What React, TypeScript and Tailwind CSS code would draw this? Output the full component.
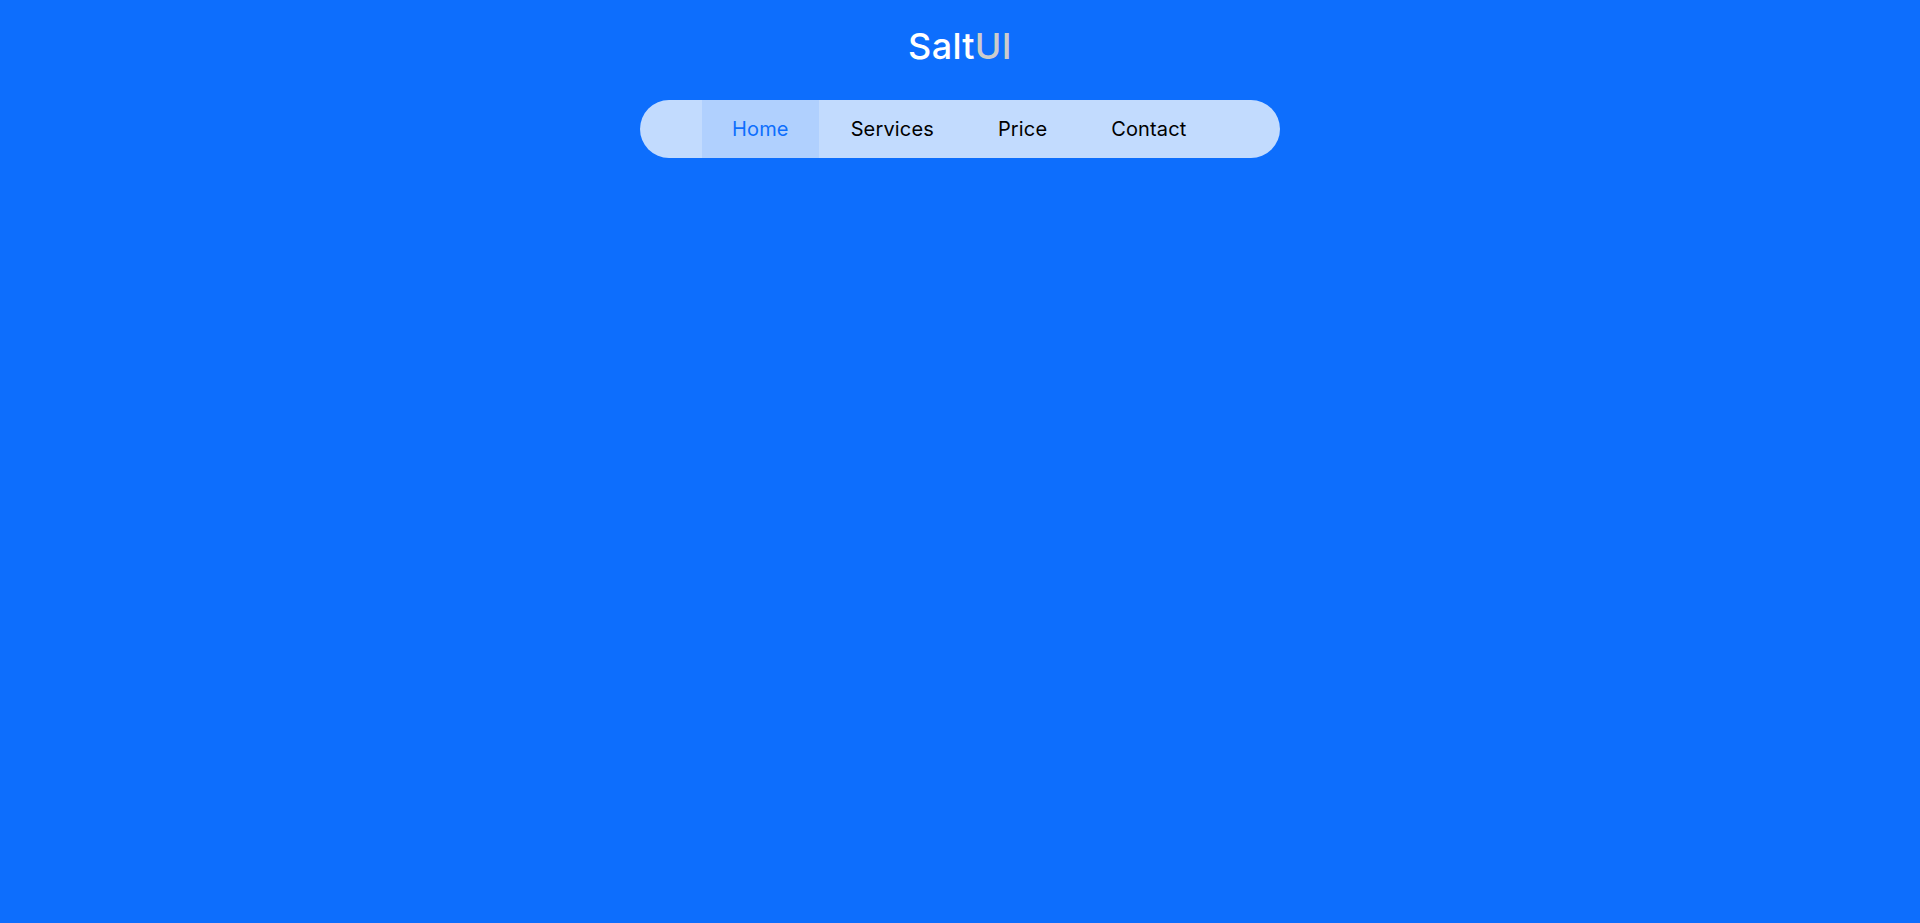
import React from "react";

export default function App() {
  const items = ["Home", "Services", "Price", "Contact"];
  return (
    <div
      className="min-h-[923px] w-full bg-[#0d6efd] pt-[28px]"
      style={{ fontFamily: "Inter, 'Noto Sans', sans-serif" }}
    >
      <h1 className="text-center text-[36px] font-medium leading-none tracking-[0.3px] text-white">
        Salt<span className="text-[#cccccc]">UI</span>
      </h1>
      <nav className="mx-auto mt-[36px] flex h-[58px] w-[640px] items-stretch rounded-full bg-[#c2dbfe] px-[62px]">
        {items.map((it, i) => (
          <a
            key={it}
            href="#"
            className={
              i === 0
                ? "flex items-center bg-[#b0d0fe] px-[30px] text-[20px] tracking-[0.15px] text-[#0d6efd]"
                : "flex items-center px-[32px] text-[20px] tracking-[0.15px] text-black"
            }
          >
            {it}
          </a>
        ))}
      </nav>
    </div>
  );
}
